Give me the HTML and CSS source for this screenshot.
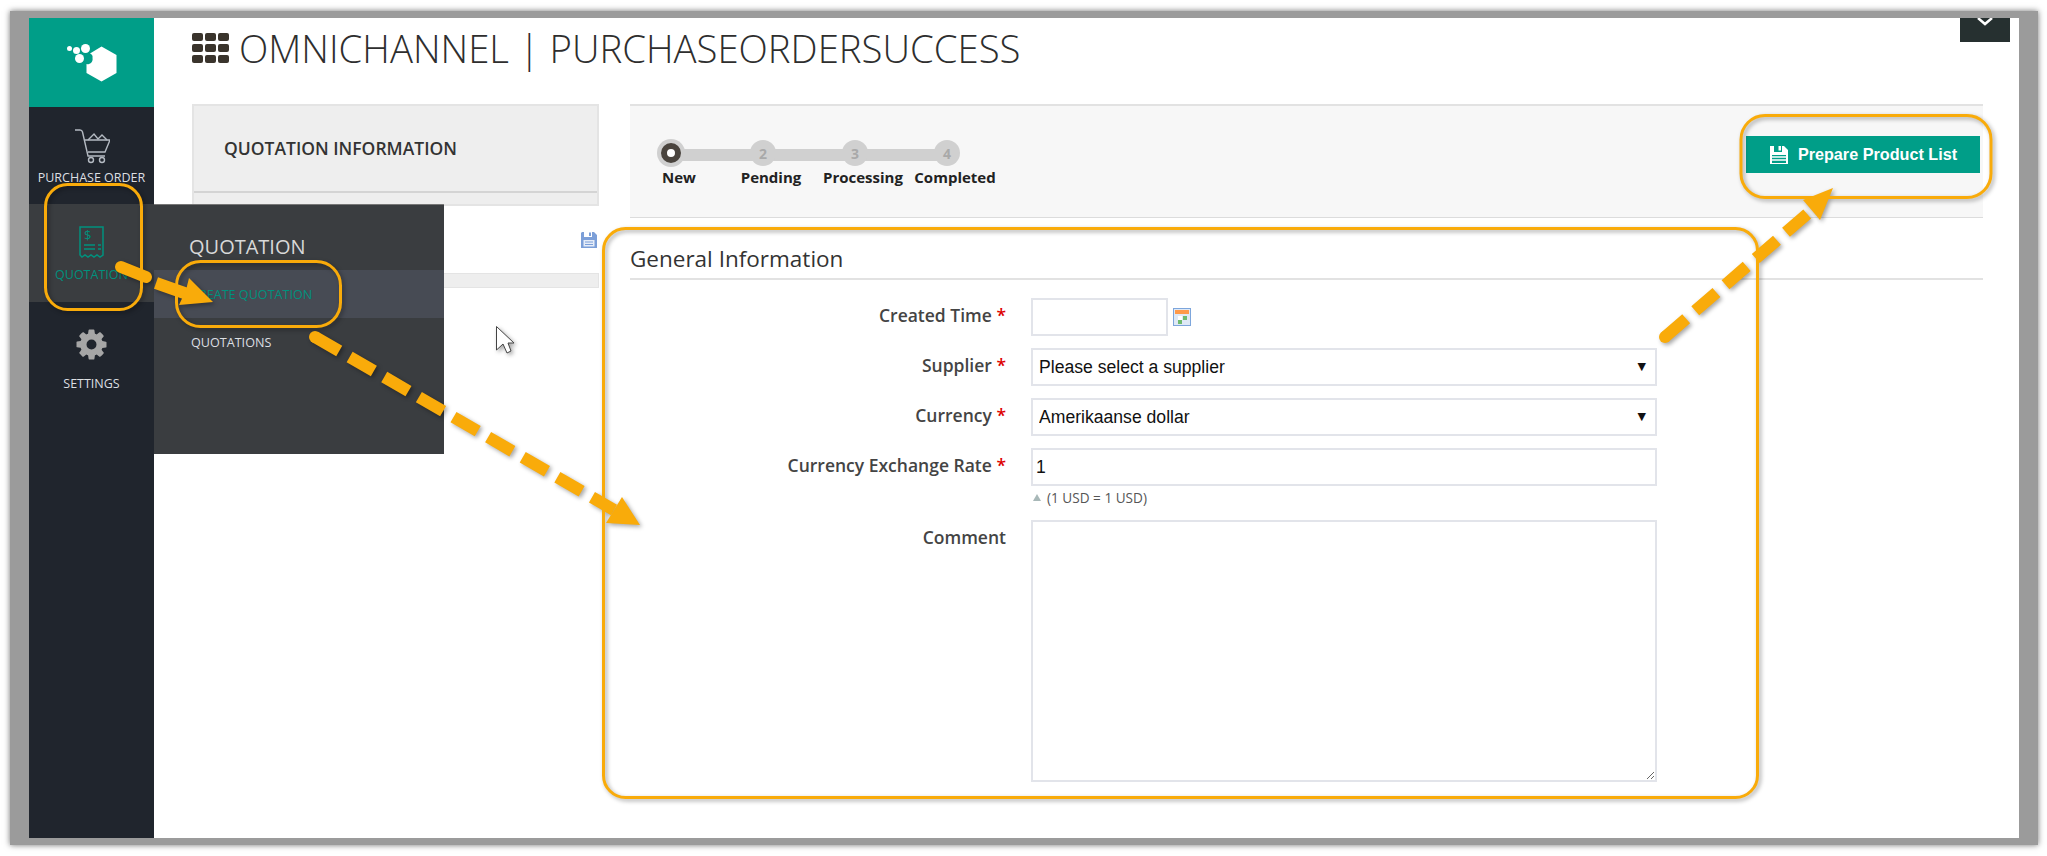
FILE: index.html
```html
<!DOCTYPE html>
<html lang="en">
<head>
    <meta charset="UTF-8">
    <title>Omnichannel | PurchaseorderSuccess</title>
    <link rel="stylesheet" href="styles.css">
</head>
<body>
    <div class="frame">
        <div class="app">
            <aside class="sidebar">
                <div class="logo">
                    <svg width="60" height="44" viewBox="0 0 60 44">
                        <circle cx="7.500" cy="7.500" r="2.500" fill="#fff"/>
                        <circle cx="14.500" cy="9.500" r="3.500" fill="#fff"/>
                        <circle cx="23.500" cy="7.500" r="4.500" fill="#fff"/>
                        <circle cx="17.500" cy="17.500" r="4.500" fill="#fff"/>
                        <path d="M39.500 5.500 L54.500 14 V32 L39.500 40.500 L24.500 32 V23 A5 5 0 0 0 30.500 17 A4 4 0 0 0 28 12.500 Z" fill="#fff"/>
                    </svg>
                </div>
                <a class="nav-item nav-purchase">
                    <svg width="36" height="36" viewBox="0 0 36 36" fill="none" stroke="#b4bac2" stroke-width="1.400">
                        <path d="M1 2 H6 Q8 2 8.500 4 L14 28 H31"/>
                        <path d="M11 12 H36 L31 24 H14"/>
                        <path d="M14 12 L20 6 L24 11 L28 7 L33 12"/>
                        <circle cx="17" cy="32" r="2.500"/>
                        <circle cx="28" cy="32" r="2.500"/>
                    </svg>
                    <span>PURCHASE ORDER</span>
                </a>
                <a class="nav-item nav-quotation">
                    <svg width="25" height="32" viewBox="0 0 25 32" fill="none" stroke="#00917d" stroke-width="1.500">
                        <path d="M1 29 V1 H24 V29 L21 31 L18 29 L15 31 L12 29 L9 31 L6 29 L3 31 Z"/>
                        <path d="M5 19 H16 M5 23 H16 M19 19 H22 M19 23 H22"/>
                        <text x="5" y="14" class="dollar">$</text>
                    </svg>
                    <span>QUOTATION</span>
                </a>
                <a class="nav-item nav-settings">
                    <svg width="35" height="35" viewBox="0 0 1792 1792" fill="#a6a6a6">
                        <path d="M1152 896q0-106-75-181t-181-75-181 75-75 181 75 181 181 75 181-75 75-181zm512-109v222q0 12-8 23t-20 13l-185 28q-19 54-39 91 35 50 107 138 10 12 10 25t-9 23q-27 37-99 108t-94 71q-12 0-26-9l-138-108q-44 23-91 38-16 136-29 186-7 28-36 28h-222q-14 0-24.500-8.500t-11.500-21.500l-28-184q-49-16-90-37l-141 107q-10 9-25 9-14 0-25-11-126-114-165-168-7-10-7-23 0-12 8-23 15-21 51-66.500t54-70.500q-27-50-41-99l-183-27q-13-2-21-12.500t-8-23.500v-222q0-12 8-23t19-13l186-28q14-46 39-92-40-57-107-138-10-12-10-24 0-10 9-23 26-36 98.500-107.500t94.500-71.500q13 0 26 10l138 107q44-23 91-38 16-136 29-186 7-28 36-28h222q14 0 24.500 8.500t11.500 21.500l28 184q49 16 90 37l142-107q9-9 24-9 13 0 25 10 129 119 165 170 7 8 7 22 0 12-8 23-15 21-51 66.500t-54 70.500q26 50 41 98l183 28q13 2 21 12.500t8 23.500z"/>
                    </svg>
                    <span>SETTINGS</span>
                </a>
                <div class="flyout">
                    <h3>QUOTATION</h3>
                    <a class="flyout-link active">CREATE QUOTATION</a>
                    <a class="flyout-link">QUOTATIONS</a>
                </div>
            </aside>

            <main class="main">
                <div class="chevron-box">
                    <svg width="16" height="8" viewBox="0 0 16 8" fill="none" stroke="#fff" stroke-width="2.500"><path d="M1 0 L8 6 L15 0"/></svg>
                </div>
                <h1 class="page-title">
                    <span class="apps-icon"><i></i><i></i><i></i><i></i><i></i><i></i><i></i><i></i><i></i></span>
                    OMNICHANNEL | PURCHASEORDERSUCCESS
                </h1>
                <div class="columns">
                    <div class="col-left">
                        <div class="info-panel">
                            <div class="info-head">QUOTATION INFORMATION</div>
                        </div>
                        <div class="save-row">
                            <svg width="16" height="16" viewBox="0 0 16 16"><path d="M1 0 H3 V5 H11 V0 H13 L16 3 V16 H0 V1 Z" fill="#7c9fd8"/><rect x="8" y="0.500" width="2" height="3.500" fill="#7c9fd8"/><rect x="2.500" y="8" width="11" height="6.500" fill="#e6edf8"/><path d="M4 10 H12 M4 12.500 H12" stroke="#7c9fd8"/></svg>
                        </div>
                        <div class="grey-bar"></div>
                    </div>

                    <div class="col-right">
                        <div class="stepper">
                            <div class="steps">
                                <div class="step current"><span class="dot"></span><span class="step-label">New</span></div>
                                <div class="step"><span class="dot">2</span><span class="step-label">Pending</span></div>
                                <div class="step"><span class="dot">3</span><span class="step-label">Processing</span></div>
                                <div class="step"><span class="dot">4</span><span class="step-label">Completed</span></div>
                            </div>
                            <button class="btn-prepare">
                                <svg width="20" height="20" viewBox="0 0 20 20"><path d="M1 1 H5 V7 H13 V1 H15 L19 5 V19 H1 Z" fill="#fff"/><rect x="9.500" y="1" width="2.500" height="4.500" fill="#fff"/><rect x="3" y="10" width="14" height="8" fill="#009e88"/><path d="M3 12 H17 M3 15 H17" stroke="#fff" stroke-width="1.300"/></svg>
                                Prepare Product List
                            </button>
                        </div>

                        <h2 class="section-title">General Information</h2>

                        <form class="form">
                            <div class="row">
                                <label>Created Time <b>*</b></label>
                                <div class="field field-date">
                                    <input type="text" class="input input-date">
                                    <svg width="18" height="18" viewBox="0 0 18 18"><rect x="0.500" y="0.500" width="17" height="17" fill="#dfe9f6" stroke="#7da6dc"/><rect x="2" y="2" width="14" height="4" fill="#ff9a4a"/><rect x="5" y="8" width="4" height="4" fill="#fff"/><rect x="10" y="8" width="4" height="4" fill="#6fbb6f"/><rect x="5" y="12" width="4" height="4" fill="#6fbb6f"/></svg>
                                </div>
                            </div>
                            <div class="row">
                                <label>Supplier <b>*</b></label>
                                <div class="field select-wrap">
                                    <select class="input"><option>Please select a supplier</option></select>
                                </div>
                            </div>
                            <div class="row">
                                <label>Currency <b>*</b></label>
                                <div class="field select-wrap">
                                    <select class="input"><option>Amerikaanse dollar</option></select>
                                </div>
                            </div>
                            <div class="row">
                                <label>Currency Exchange Rate <b>*</b></label>
                                <div class="field">
                                    <input type="text" class="input input-rate" value="1">
                                    <div class="hint"><span class="hint-arrow"></span>(1 USD = 1 USD)</div>
                                </div>
                            </div>
                            <div class="row">
                                <label>Comment</label>
                                <div class="field">
                                    <textarea class="input comment"></textarea>
                                </div>
                            </div>
                        </form>
                    </div>
                </div>
            </main>
        </div>
    </div>

    <!-- callouts drawn on top of the screenshot -->
    <svg class="callouts" width="2047" height="856" viewBox="0 0 2047 856">
        <g fill="none" stroke="#f9ab0a" stroke-width="3">
            <rect x="45.500" y="184.500" width="96" height="125" rx="22"/>
            <rect x="176.500" y="261.500" width="164" height="65" rx="24"/>
            <rect x="603.500" y="228.500" width="1154" height="569" rx="22"/>
            <rect x="1741" y="115.500" width="250" height="82" rx="24"/>
        </g>
        <g fill="none" stroke="#f9ab0a" stroke-width="12">
            <path d="M121 267 L146 277" stroke-linecap="round"/>
            <path d="M156 283 L190 295"/>
            <path d="M315 337 L614 510" stroke-dasharray="28 12"/>
            <path d="M1665 337 L1813 209" stroke-dasharray="28 12"/>
        </g>
        <g fill="#f9ab0a">
            <circle cx="315" cy="337" r="6"/>
            <circle cx="1665" cy="337" r="6"/>
            <path d="M213 302 L189 278 L186 290 L179 305 Z"/>
            <path d="M640 525 L622 497 L606 523 Z"/>
            <path d="M1833 188 L1803 200 L1820 220 Z"/>
        </g>
        <path d="M496.500 326.500 V350 L503 344 L507 353 L511 351 L508 343 L514 343 Z" fill="#fff" stroke="#444" stroke-width="1"/>
    </svg>
</body>
</html>
```

FILE: styles.css
```css
body {
    margin: 0;
    background: #fff;
    font-family: "Open Sans", sans-serif;
    color: #333;
}
.frame {
    margin: 11px 9px 11px 10px;
    padding: 7px 19px;
    background: #9b9b9b;
    box-shadow: 0 0 6px rgba(0, 0, 0, 0.55);
}
.app {
    display: flex;
    height: 820px;
    background: #fff;
    overflow: hidden;
}

/* sidebar */
.sidebar {
    position: relative;
    flex: 0 0 125px;
    background: #20252d;
    z-index: 2;
}
.logo {
    display: flex;
    justify-content: center;
    align-items: center;
    height: 89px;
    background: #009e88;
}
.nav-item {
    display: flex;
    flex-direction: column;
    align-items: center;
    font-size: 12.500px;
    line-height: 15px;
    color: #dcdfe2;
    white-space: nowrap;
}
.nav-purchase {
    height: 76px;
    padding-top: 21px;
    gap: 6px;
}
.nav-quotation {
    height: 76px;
    padding-top: 22px;
    gap: 9px;
    background: #3a3d40;
    color: #00917d;
}
.nav-settings {
    padding-top: 25px;
    gap: 14px;
}
.dollar {
    font-family: "Open Sans", sans-serif;
    font-size: 13px;
    fill: #00917d;
    stroke: none;
}
.flyout {
    position: absolute;
    left: 125px;
    top: 186px;
    width: 290px;
    height: 250px;
    background: #3a3d40;
    box-shadow: inset 0 1px 0 #777;
}
.flyout h3 {
    margin: 0;
    padding: 29px 0 0 35px;
    height: 37px;
    font-size: 20px;
    line-height: 28px;
    font-weight: 400;
    color: #d8d8d8;
}
.flyout-link {
    display: block;
    height: 48px;
    padding-left: 37px;
    font-size: 12.600px;
    line-height: 50px;
    color: #dcdfe2;
}
.flyout-link.active {
    background: #474b54;
    color: #00917d;
}

/* main area */
.main {
    position: relative;
    flex: 1;
    padding: 0 36px 0 38px;
}
.chevron-box {
    position: absolute;
    top: 0;
    right: 9px;
    width: 50px;
    height: 24px;
    background: #263030;
    text-align: center;
}
.chevron-box svg {
    display: block;
    margin: 0 auto;
}
.page-title {
    display: flex;
    align-items: center;
    gap: 10px;
    height: 86px;
    margin: 0;
    padding-bottom: 26px;
    box-sizing: border-box;
    font-size: 38.300px;
    line-height: 46px;
    font-weight: 300;
    color: #2e2e2e;
}
.apps-icon {
    display: grid;
    grid-template-columns: repeat(3, 11px);
    grid-auto-rows: 8px;
    gap: 3px 2px;
}
.apps-icon i {
    background: #3a342c;
    border-radius: 2px;
}
.columns {
    display: flex;
    gap: 31px;
}
.col-left {
    flex: 0 0 407px;
}
.col-right {
    flex: 1;
}
.info-panel {
    box-sizing: border-box;
    height: 102px;
    border: 2px solid #e4e4e4;
    background: #eee;
}
.info-head {
    height: 85px;
    padding-left: 30px;
    font-size: 17.500px;
    line-height: 85px;
    font-weight: 600;
    color: #333;
    border-bottom: 2px solid #d4d4d4;
}
.save-row {
    display: flex;
    justify-content: flex-end;
    padding: 26px 2px 0 0;
}
.save-row svg {
    display: block;
}
.grey-bar {
    height: 15px;
    margin-top: 25px;
    background: #eee;
    border: 1px solid #e4e4e4;
    box-sizing: border-box;
}

/* stepper */
.stepper {
    display: flex;
    justify-content: space-between;
    align-items: flex-start;
    height: 114px;
    box-sizing: border-box;
    padding: 33px 3px 0 3px;
    background: #f7f7f7;
    border-top: 2px solid #e2e2e2;
    border-bottom: 1px solid #dcdcdc;
}
.steps {
    position: relative;
    display: flex;
}
.steps::before {
    content: "";
    position: absolute;
    left: 38px;
    top: 10px;
    width: 275px;
    height: 12px;
    background: #d0d0d0;
}
.step {
    position: relative;
    display: flex;
    flex-direction: column;
    align-items: center;
    width: 92px;
}
.dot {
    width: 26px;
    height: 26px;
    margin: 1px 16px 0 0;
    border-radius: 50%;
    background: #d0d0d0;
    color: #a9a9a9;
    font-size: 14px;
    line-height: 27px;
    font-weight: 700;
    text-align: center;
}
.step.current .dot {
    width: 8px;
    height: 8px;
    margin: 4px 16px 3px 0;
    background: #fff;
    border: 6px solid #4a443e;
    box-shadow: 0 0 0 4px #d0d0d0;
}
.step-label {
    margin-top: 2px;
    font-size: 15px;
    line-height: 19px;
    font-weight: 700;
    color: #222;
    white-space: nowrap;
}
.btn-prepare {
    display: flex;
    align-items: center;
    justify-content: center;
    gap: 9px;
    width: 234px;
    height: 37px;
    margin-top: -3px;
    padding: 0;
    border: 0;
    background: #009e88;
    color: #fff;
    font-family: "Liberation Sans", sans-serif;
    font-size: 16.200px;
    font-weight: 700;
}

/* form */
.section-title {
    display: flex;
    align-items: flex-end;
    height: 62px;
    margin: 0;
    padding-bottom: 4px;
    box-sizing: border-box;
    font-size: 22.500px;
    line-height: 30px;
    font-weight: 400;
    color: #333;
    border-bottom: 2px solid #e2e2e2;
}
.form {
    display: flex;
    flex-direction: column;
    gap: 12px;
    padding-top: 18px;
}
.row {
    display: flex;
    gap: 25px;
}
.row label {
    flex: 0 0 376px;
    text-align: right;
    font-size: 17.500px;
    line-height: 34px;
    font-weight: 600;
    color: #444;
}
.row label b {
    color: #d00;
    font-weight: 600;
}
.field {
    flex: 0 0 626px;
}
.field-date {
    display: flex;
    align-items: center;
    gap: 5px;
}
.input {
    display: block;
    width: 100%;
    height: 38px;
    box-sizing: border-box;
    padding: 0 6px;
    border: 2px solid #e2e4ea;
    border-radius: 0;
    background: #fff;
    color: #111;
    font-family: "Liberation Sans", sans-serif;
    font-size: 17.600px;
    appearance: none;
    outline: none;
}
.input-date {
    width: 137px;
}
.input-rate {
    padding: 0 3px;
}
.select-wrap {
    position: relative;
}
.select-wrap::after {
    content: "\25BC";
    position: absolute;
    right: 11px;
    top: 11px;
    font-family: "DejaVu Sans", sans-serif;
    font-size: 11px;
    line-height: 16px;
    color: #111;
}
.hint {
    display: flex;
    align-items: center;
    gap: 6px;
    margin: 2px 0 1px;
    padding-left: 2px;
    font-size: 13.600px;
    line-height: 19px;
    color: #555;
}
.hint-arrow {
    width: 0;
    height: 0;
    border: 4px solid transparent;
    border-top: 0;
    border-bottom: 7px solid #a8b8b8;
}
.comment {
    height: 262px;
    resize: both;
}
.callouts {
    position: absolute;
    left: 0;
    top: 0;
    z-index: 5;
    filter: drop-shadow(2px 2px 2px rgba(0, 0, 0, 0.35));
    pointer-events: none;
}
```
